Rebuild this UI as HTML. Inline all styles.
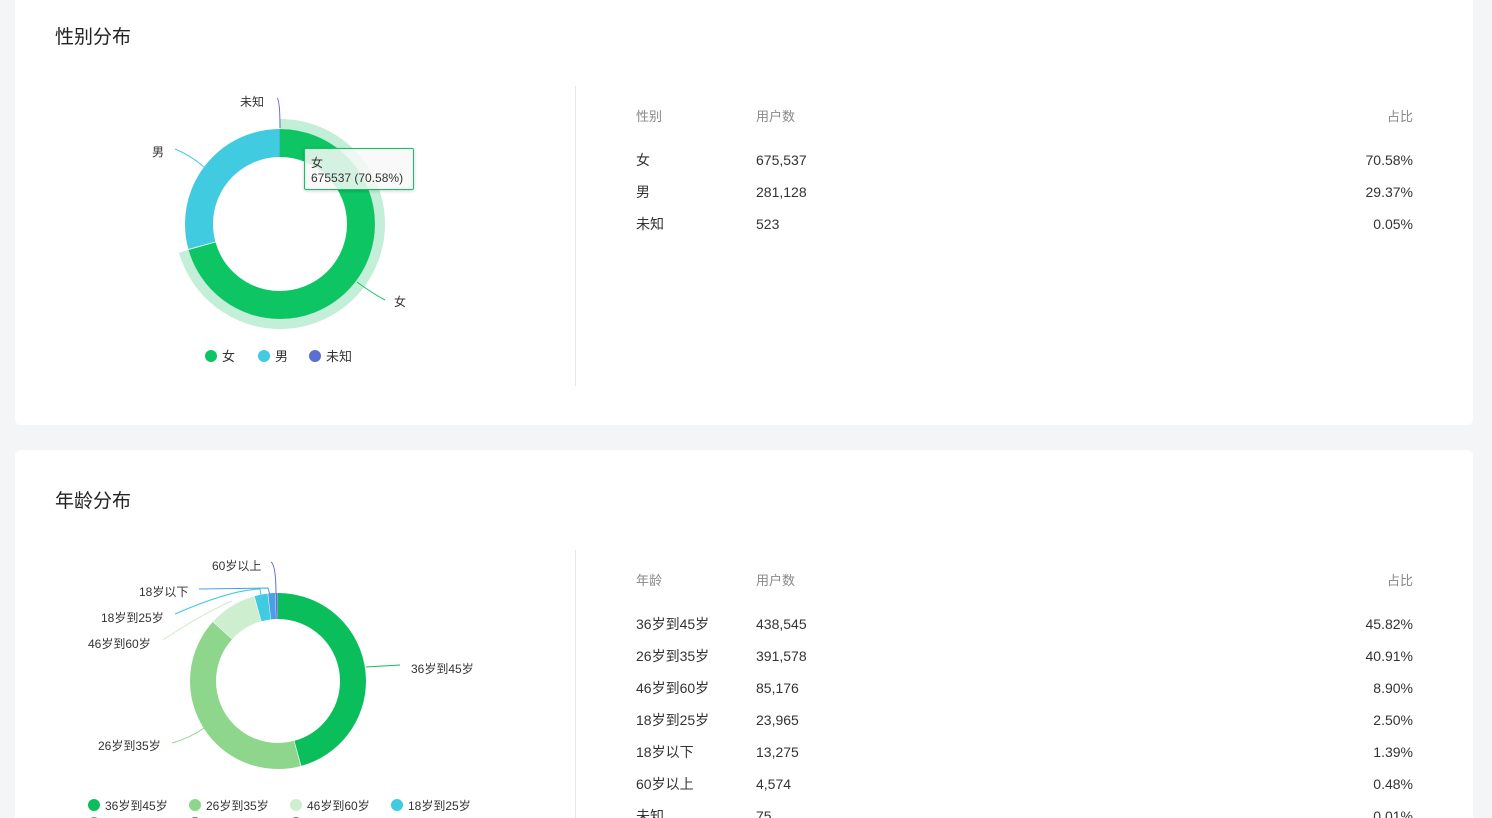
<!DOCTYPE html>
<html><head><meta charset="utf-8"><style>
html,body{margin:0;width:1492px;height:818px;overflow:hidden}
body{background:#f4f5f7;font-family:"Liberation Sans","Noto Sans CJK SC",sans-serif;position:relative;color:#333}
.card{position:absolute;left:15px;width:1458px;background:#fff;border-radius:6px}
.t{position:absolute;font-size:19px;color:#222}
.abs{position:absolute;white-space:nowrap}
.h{font-size:13px;color:#888}
.r{font-size:14px;color:#333}
.n{font-size:14px;color:#333}
.vl{position:absolute;left:575px;width:1px;background:#e8e8e8}
svg text{font-family:"Liberation Sans","Noto Sans CJK SC",sans-serif;font-size:12px;fill:#333}
</style></head><body>
<div class="card" style="top:-10px;height:435px"></div>
<div class="card" style="top:450px;height:380px"></div>
<div class="t" style="left:55px;top:22px">性别分布</div>
<div class="t" style="left:55px;top:486px">年龄分布</div>
<div class="vl" style="top:86px;height:300px"></div>
<div class="vl" style="top:550px;height:268px"></div>

<svg class="abs" style="left:0;top:0" width="575" height="818">
<g transform="rotate(-90 280 224)">
<circle cx="280" cy="224" r="100" fill="none" stroke="#c3eed7" stroke-width="10" stroke-dasharray="443.5 1000"/>
<circle cx="280" cy="224" r="81" fill="none" stroke="#0dc563" stroke-width="28" stroke-dasharray="359.2 1000"/>
<circle cx="280" cy="224" r="81" fill="none" stroke="#40cbe0" stroke-width="28" stroke-dasharray="149.2 1000" stroke-dashoffset="-359.7"/>
<circle cx="280" cy="224" r="81" fill="none" stroke="#fff" stroke-width="29" stroke-dasharray="0.8 1000" stroke-dashoffset="-359.2"/>
<circle cx="280" cy="224" r="81" fill="none" stroke="#5b6fd0" stroke-width="28" stroke-dasharray="0.4 1000" stroke-dashoffset="-508.5"/>
</g>
<path d="M277 98 Q280 100 280 128" fill="none" stroke="#5b6fd0"/>
<path d="M175 149 Q190 155 204 167" fill="none" stroke="#40cbe0"/>
<path d="M357 282 Q375 295 385 300" fill="none" stroke="#0dc563"/>
<text x="240" y="106">未知</text><text x="152" y="156">男</text><text x="394" y="306">女</text>
<circle cx="211" cy="356" r="6" fill="#0dc563"/><text x="222" y="361" style="font-size:13px">女</text>
<circle cx="264" cy="356" r="6" fill="#40cbe0"/><text x="275" y="361" style="font-size:13px">男</text>
<circle cx="315" cy="356" r="6" fill="#5b6fd0"/><text x="326" y="361" style="font-size:13px">未知</text>

<g transform="rotate(-90 278 681)">
<circle cx="278" cy="681" r="75" fill="none" stroke="#0abf5b" stroke-width="26" stroke-dasharray="215.4 1000"/>
<circle cx="278" cy="681" r="75" fill="none" stroke="#8dd68b" stroke-width="26" stroke-dasharray="192.3 1000" stroke-dashoffset="-216.1"/>
<circle cx="278" cy="681" r="75" fill="none" stroke="#cdeecf" stroke-width="26" stroke-dasharray="41.4 1000" stroke-dashoffset="-408.9"/>
<circle cx="278" cy="681" r="75" fill="none" stroke="#40cbe0" stroke-width="26" stroke-dasharray="11.3 1000" stroke-dashoffset="-450.8"/>
<circle cx="278" cy="681" r="75" fill="none" stroke="#4a9fe8" stroke-width="26" stroke-dasharray="6 1000" stroke-dashoffset="-462.6"/>
<circle cx="278" cy="681" r="75" fill="none" stroke="#5b6fd0" stroke-width="26" stroke-dasharray="1.8 1000" stroke-dashoffset="-469"/>
</g>
<path d="M366 667 L400 665" fill="none" stroke="#0abf5b"/>
<path d="M172 743 Q190 738 204 728" fill="none" stroke="#8dd68b"/>
<path d="M163 640 Q200 615 232 601" fill="none" stroke="#cdeecf"/>
<path d="M175 614 Q230 590 260 589 L261 595" fill="none" stroke="#40cbe0"/>
<path d="M199 589 L268 588 L270 595" fill="none" stroke="#4a9fe8"/>
<path d="M271 562 Q276 565 276 594" fill="none" stroke="#5b6fd0"/>
<text x="212" y="570">60岁以上</text><text x="139" y="596">18岁以下</text><text x="101" y="622">18岁到25岁</text><text x="88" y="648">46岁到60岁</text><text x="411" y="673">36岁到45岁</text><text x="98" y="750">26岁到35岁</text>
<circle cx="94" cy="805" r="6" fill="#0abf5b"/><text x="105" y="810">36岁到45岁</text>
<circle cx="195" cy="805" r="6" fill="#8dd68b"/><text x="206" y="810">26岁到35岁</text>
<circle cx="296" cy="805" r="6" fill="#cdeecf"/><text x="307" y="810">46岁到60岁</text>
<circle cx="397" cy="805" r="6" fill="#40cbe0"/><text x="408" y="810">18岁到25岁</text>
<circle cx="94" cy="823" r="6" fill="#4a9fe8"/><circle cx="195" cy="823" r="6" fill="#5b6fd0"/><circle cx="296" cy="823" r="6" fill="#8a5ec8"/>
</svg>

<div class="abs" style="left:304px;top:148px;width:110px;height:42px;background:rgba(248,248,248,.85);border:1px solid #0dc563;border-radius:2px;box-shadow:0 1px 3px rgba(0,0,0,.2);font-size:12px;line-height:15px;color:#333;padding:7px 0 0 6px;box-sizing:border-box">女<br>675537 (70.58%)</div>

<div class="abs h" style="left:636px;top:106px">性别</div><div class="abs h" style="left:756px;top:106px">用户数</div><div class="abs h" style="right:79px;top:106px">占比</div>
<div class="abs r" style="left:636px;top:150px">女</div><div class="abs n" style="left:756px;top:152px">675,537</div><div class="abs n" style="right:79px;top:152px">70.58%</div>
<div class="abs r" style="left:636px;top:182px">男</div><div class="abs n" style="left:756px;top:184px">281,128</div><div class="abs n" style="right:79px;top:184px">29.37%</div>
<div class="abs r" style="left:636px;top:214px">未知</div><div class="abs n" style="left:756px;top:216px">523</div><div class="abs n" style="right:79px;top:216px">0.05%</div>

<div class="abs h" style="left:636px;top:570px">年龄</div><div class="abs h" style="left:756px;top:570px">用户数</div><div class="abs h" style="right:79px;top:570px">占比</div>
<div class="abs r" style="left:636px;top:614px">36岁到45岁</div><div class="abs n" style="left:756px;top:616px">438,545</div><div class="abs n" style="right:79px;top:616px">45.82%</div>
<div class="abs r" style="left:636px;top:646px">26岁到35岁</div><div class="abs n" style="left:756px;top:648px">391,578</div><div class="abs n" style="right:79px;top:648px">40.91%</div>
<div class="abs r" style="left:636px;top:678px">46岁到60岁</div><div class="abs n" style="left:756px;top:680px">85,176</div><div class="abs n" style="right:79px;top:680px">8.90%</div>
<div class="abs r" style="left:636px;top:710px">18岁到25岁</div><div class="abs n" style="left:756px;top:712px">23,965</div><div class="abs n" style="right:79px;top:712px">2.50%</div>
<div class="abs r" style="left:636px;top:742px">18岁以下</div><div class="abs n" style="left:756px;top:744px">13,275</div><div class="abs n" style="right:79px;top:744px">1.39%</div>
<div class="abs r" style="left:636px;top:774px">60岁以上</div><div class="abs n" style="left:756px;top:776px">4,574</div><div class="abs n" style="right:79px;top:776px">0.48%</div>
<div class="abs r" style="left:636px;top:806px">未知</div><div class="abs n" style="left:756px;top:808px">75</div><div class="abs n" style="right:79px;top:808px">0.01%</div>
</body></html>
